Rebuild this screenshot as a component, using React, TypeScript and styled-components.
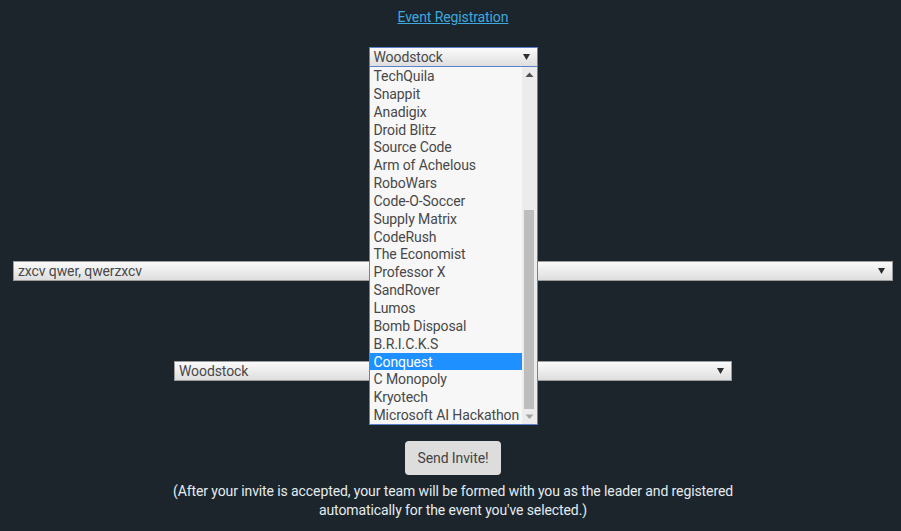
import styled, { createGlobalStyle } from 'styled-components';

const GlobalStyle = createGlobalStyle`
  html, body {
    margin: 0;
    padding: 0;
    background: #1b252b;
  }
  body {
    font-family: Roboto, "Liberation Sans", Arial, sans-serif;
    letter-spacing: -0.1px;
  }
`;

const EVENTS = [
  'TechQuila',
  'Snappit',
  'Anadigix',
  'Droid Blitz',
  'Source Code',
  'Arm of Achelous',
  'RoboWars',
  'Code-O-Soccer',
  'Supply Matrix',
  'CodeRush',
  'The Economist',
  'Professor X',
  'SandRover',
  'Lumos',
  'Bomb Disposal',
  'B.R.I.C.K.S',
  'Conquest',
  'C Monopoly',
  'Kryotech',
  'Microsoft AI Hackathon',
];

const Page = styled.div`
  display: flex;
  flex-direction: column;
  align-items: center;
  min-height: 531px;
  padding-left: 5px;
  box-sizing: border-box;
`;

const Title = styled.a`
  margin-top: 8px;
  font-size: 14px;
  line-height: 18px;
  color: #3ea8df;
  text-decoration: underline;
`;

const SelectWrap = styled.div<{ $top: number }>`
  position: relative;
  margin-top: ${(p) => p.$top}px;
`;

const SelectBox = styled.div<{ $width: number; $focused?: boolean }>`
  display: flex;
  align-items: center;
  justify-content: space-between;
  box-sizing: border-box;
  width: ${(p) => p.$width}px;
  height: 20px;
  padding: 0 7px 0 4px;
  border: 1px solid ${(p) => (p.$focused ? '#5c82c9' : '#9c9c9c')};
  background: linear-gradient(#fbfbfb, #dedede);
  color: #484848;
  font-size: 14px;
  line-height: 18px;
  white-space: nowrap;
`;

const Arrow = styled.svg`
  flex: none;
  width: 7px;
  height: 6px;
  fill: #2e2e2e;
`;

const ListBox = styled.div`
  position: absolute;
  top: 100%;
  left: 0;
  z-index: 2;
  display: flex;
  box-sizing: border-box;
  width: 100%;
  height: 358px;
  border: 1px solid #5c82c9;
  border-top: none;
  background: #f7f7f7;
`;

const Options = styled.ul`
  flex: 1;
  margin: 0;
  padding: 0;
  list-style: none;
  overflow: hidden;
`;

const Option = styled.li<{ $selected?: boolean }>`
  box-sizing: border-box;
  height: 17.85px;
  padding: 2px 0 0 4px;
  font-size: 14px;
  line-height: 15.85px;
  white-space: nowrap;
  color: ${(p) => (p.$selected ? '#ffffff' : '#484848')};
  background: ${(p) => (p.$selected ? '#1e90ff' : 'transparent')};
`;

const Scrollbar = styled.div`
  flex: none;
  display: flex;
  flex-direction: column;
  align-items: center;
  width: 15px;
  background: #ececec;
`;

const ScrollArrow = styled.svg<{ $disabled?: boolean }>`
  flex: none;
  width: 15px;
  height: 15px;
  fill: ${(p) => (p.$disabled ? '#a3a3a3' : '#505050')};
`;

const Track = styled.div`
  flex: 1;
  display: flex;
  flex-direction: column;
  justify-content: flex-end;
  align-items: center;
  width: 100%;
`;

const Thumb = styled.div`
  width: 10px;
  height: 199px;
  background: #bdbdbd;
`;

const Button = styled.button`
  margin-top: 60px;
  width: 96px;
  height: 34px;
  border: none;
  border-radius: 4px;
  background: #dddddd;
  color: #444;
  font-family: inherit;
  font-size: 14px;
  letter-spacing: inherit;
`;

const Note = styled.p`
  margin: 7px 0 0;
  width: 580px;
  text-align: center;
  color: #e4ecf0;
  font-size: 14px;
  line-height: 19px;
`;

function DownArrow() {
  return (
    <Arrow viewBox="0 0 7 6">
      <path d="M0 0h7L3.5 6z" />
    </Arrow>
  );
}

export default function App() {
  return (
    <>
      <GlobalStyle />
      <Page>
        <Title href="#">Event Registration</Title>

        <SelectWrap $top={21}>
          <SelectBox $width={169} $focused>
            <span>Woodstock</span>
            <DownArrow />
          </SelectBox>
          <ListBox>
            <Options>
              {EVENTS.map((name) => (
                <Option key={name} $selected={name === 'Conquest'}>
                  {name}
                </Option>
              ))}
            </Options>
            <Scrollbar>
              <ScrollArrow viewBox="0 0 15 15">
                <path d="M3.5 10h8L7.5 5.5z" />
              </ScrollArrow>
              <Track>
                <Thumb />
              </Track>
              <ScrollArrow viewBox="0 0 15 15" $disabled>
                <path d="M3.5 5.5h8L7.5 10z" />
              </ScrollArrow>
            </Scrollbar>
          </ListBox>
        </SelectWrap>

        <SelectWrap $top={194}>
          <SelectBox $width={880}>
            <span>zxcv qwer, qwerzxcv</span>
            <DownArrow />
          </SelectBox>
        </SelectWrap>

        <SelectWrap $top={80}>
          <SelectBox $width={558}>
            <span>Woodstock</span>
            <DownArrow />
          </SelectBox>
        </SelectWrap>

        <Button>Send Invite!</Button>

        <Note>
          (After your invite is accepted, your team will be formed with you as
          the leader and registered automatically for the event you've
          selected.)
        </Note>
      </Page>
    </>
  );
}
